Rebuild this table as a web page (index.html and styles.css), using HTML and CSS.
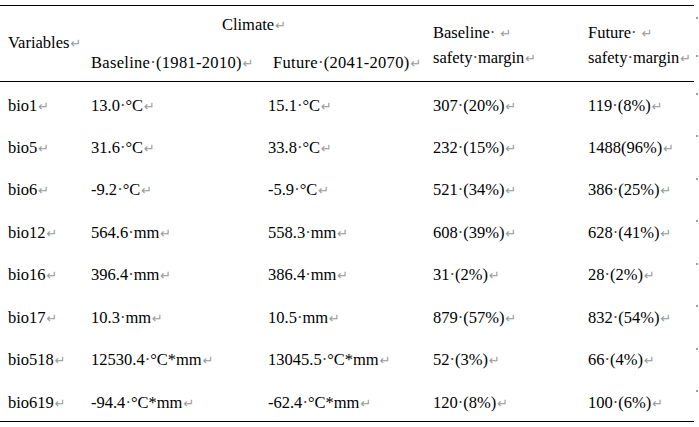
FILE: index.html
```html
<!DOCTYPE html>
<html>
<head>
<meta charset="utf-8">
<link rel="stylesheet" href="styles.css">
</head>
<body>
<table class="tbl">
  <colgroup>
    <col class="c1"><col class="c2"><col class="c3"><col class="c4"><col class="c5"><col class="c6">
  </colgroup>
  <thead>
    <tr class="h1">
      <th class="top bot" rowspan="2">Variables<span class="rt">↵</span></th>
      <th class="top center" colspan="2">Climate<span class="rt">↵</span></th>
      <th class="top bot two" rowspan="2">Baseline<span class="sp">·</span>&nbsp;<span class="rt">↵</span><br>safety<span class="sp">·</span>margin<span class="rt">↵</span></th>
      <th class="top bot two" rowspan="2">Future<span class="sp">·</span>&nbsp;<span class="rt">↵</span><br>safety<span class="sp">·</span>margin<span class="rt">↵</span></th>
      <th class="mk"><span class="dot"></span></th>
    </tr>
    <tr class="h2">
      <th class="bot wide">Baseline<span class="sp">·</span>(1981-2010)<span class="rt">↵</span></th>
      <th class="bot wide fut">Future<span class="sp">·</span>(2041-2070)<span class="rt">↵</span></th>
      <th class="mk"><span class="dot"></span></th>
    </tr>
  </thead>
  <tbody>
    <tr><td>bio1<span class="rt">↵</span></td><td>13.0<span class="sp">·</span>°C<span class="rt">↵</span></td><td>15.1<span class="sp">·</span>°C<span class="rt">↵</span></td><td>307<span class="sp">·</span>(20%)<span class="rt">↵</span></td><td>119<span class="sp">·</span>(8%)<span class="rt">↵</span></td><td class="mk"><span class="dot"></span></td></tr>
    <tr><td>bio5<span class="rt">↵</span></td><td>31.6<span class="sp">·</span>°C<span class="rt">↵</span></td><td>33.8<span class="sp">·</span>°C<span class="rt">↵</span></td><td>232<span class="sp">·</span>(15%)<span class="rt">↵</span></td><td>1488(96%)<span class="rt">↵</span></td><td class="mk"><span class="dot"></span></td></tr>
    <tr><td>bio6<span class="rt">↵</span></td><td>-9.2<span class="sp">·</span>°C<span class="rt">↵</span></td><td>-5.9<span class="sp">·</span>°C<span class="rt">↵</span></td><td>521<span class="sp">·</span>(34%)<span class="rt">↵</span></td><td>386<span class="sp">·</span>(25%)<span class="rt">↵</span></td><td class="mk"><span class="dot"></span></td></tr>
    <tr><td>bio12<span class="rt">↵</span></td><td>564.6<span class="sp">·</span>mm<span class="rt">↵</span></td><td>558.3<span class="sp">·</span>mm<span class="rt">↵</span></td><td>608<span class="sp">·</span>(39%)<span class="rt">↵</span></td><td>628<span class="sp">·</span>(41%)<span class="rt">↵</span></td><td class="mk"><span class="dot"></span></td></tr>
    <tr><td>bio16<span class="rt">↵</span></td><td>396.4<span class="sp">·</span>mm<span class="rt">↵</span></td><td>386.4<span class="sp">·</span>mm<span class="rt">↵</span></td><td>31<span class="sp">·</span>(2%)<span class="rt">↵</span></td><td>28<span class="sp">·</span>(2%)<span class="rt">↵</span></td><td class="mk"><span class="dot"></span></td></tr>
    <tr><td>bio17<span class="rt">↵</span></td><td>10.3<span class="sp">·</span>mm<span class="rt">↵</span></td><td>10.5<span class="sp">·</span>mm<span class="rt">↵</span></td><td>879<span class="sp">·</span>(57%)<span class="rt">↵</span></td><td>832<span class="sp">·</span>(54%)<span class="rt">↵</span></td><td class="mk"><span class="dot"></span></td></tr>
    <tr><td>bio518<span class="rt">↵</span></td><td>12530.4<span class="sp">·</span>°C*mm<span class="rt">↵</span></td><td>13045.5<span class="sp">·</span>°C*mm<span class="rt">↵</span></td><td>52<span class="sp">·</span>(3%)<span class="rt">↵</span></td><td>66<span class="sp">·</span>(4%)<span class="rt">↵</span></td><td class="mk"><span class="dot"></span></td></tr>
    <tr class="last"><td>bio619<span class="rt">↵</span></td><td>-94.4<span class="sp">·</span>°C*mm<span class="rt">↵</span></td><td>-62.4<span class="sp">·</span>°C*mm<span class="rt">↵</span></td><td>120<span class="sp">·</span>(8%)<span class="rt">↵</span></td><td>100<span class="sp">·</span>(6%)<span class="rt">↵</span></td><td class="mk"><span class="dot"></span></td></tr>
  </tbody>
</table>
</body>
</html>
```

FILE: styles.css
```css
html, body {
  margin: 0;
  background: #fff;
}
body {
  padding-top: 5px;
  font-family: "Liberation Serif", "Times New Roman", serif;
  font-size: 16.5px;
  color: #000;
}
.tbl {
  border-collapse: collapse;
  table-layout: fixed;
  width: 699px;
}
.c1 { width: 83px; }
.c2 { width: 177px; }
.c3 { width: 165px; }
.c4 { width: 155px; }
.c5 { width: 114px; }
.c6 { width: 5px; }

.tbl th,
.tbl td {
  padding: 0 0 0 8px;
  font-weight: normal;
  text-align: left;
  vertical-align: middle;
  white-space: nowrap;
  line-height: 24px;
}
.tbl td {
  padding-top: 6px;
}
.tbl th.center {
  text-align: center;
  padding-left: 0;
  padding-top: 2px;
}
.tbl th.two {
  padding-top: 4px;
}
.tbl th.wide {
  letter-spacing: 0.3px;
  padding-top: 2px;
}
.tbl th.fut {
  padding-left: 13px;
}
.h1 { height: 38px; }
.h2 { height: 38px; }
.tbl tbody tr { height: 42.5px; }

.top { border-top: 1px solid #000; }
.bot { border-bottom: 1px solid #000; }
.tbl tr.last td:not(.mk) { border-bottom: 1px solid #000; }

.rt {
  font-family: "DejaVu Sans", sans-serif;
  font-size: 13px;
  letter-spacing: 0;
  color: #9a9a9a;
  margin-left: 1px;
}
.sp {
  color: #444;
}
.tbl .mk {
  padding: 11px 0 0 2px;
  vertical-align: top;
  line-height: 0;
}
.dot {
  display: block;
  width: 2px;
  height: 2px;
  background: #a0a0a0;
}
```
